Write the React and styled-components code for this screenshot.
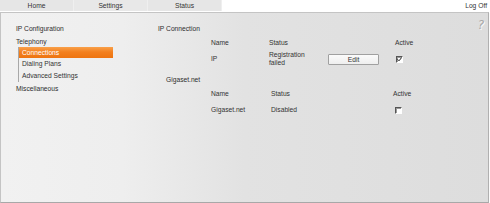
import React from "react";
import styled, { createGlobalStyle } from "styled-components";

const Global = createGlobalStyle`
  html, body { margin: 0; padding: 0; background: #fff; }
  body { width: 490px; height: 203px; overflow: hidden; font-family: "Liberation Sans", Arial, sans-serif; font-size: 6.7px; color: #333; }
`;

const Page = styled.div`
  width: 490px;
  height: 203px;
  display: flex;
  flex-direction: column;
`;

const TopBar = styled.div`
  display: flex;
  height: 11px;
  align-items: stretch;
`;

const Tab = styled.div`
  width: 73px;
  display: flex;
  align-items: center;
  justify-content: center;
  background: ${(p) => (p.$active ? "#e8e8e8" : "#e6e6e6")};
  border-right: 1px solid #efefef;
  color: #333;
`;

const Spacer = styled.div`
  flex: 1;
`;

const LogOff = styled.div`
  display: flex;
  align-items: center;
  padding: 0 3px 1px 0;
  color: #333;
`;

const Panel = styled.div`
  position: relative;
  width: 487px;
  height: 189px;
  margin-top: 1px;
  border: 1px solid #c4c4c4;
  border-right-color: #b0b0b0;
  border-bottom-color: #a8a8a8;
  box-shadow: 0 1px 1px rgba(0, 0, 0, 0.12);
  background: linear-gradient(90deg, #f1f1f1 0%, #eeeeee 25%, #e2e2e2 50%, #dddddd 100%);
  display: flex;
`;

const Help = styled.div`
  position: absolute;
  right: 4px;
  top: 6px;
  font-family: "DejaVu Sans", sans-serif;
  font-size: 12px;
  font-style: italic;
  color: #a8a8a8;
  text-shadow: 1px 1px 0 #fafafa;
  line-height: 13px;
`;

const Sidebar = styled.div`
  width: 142px;
  padding: 9px 0 0 15px;
  display: flex;
  flex-direction: column;
`;

const MenuItem = styled.div`
  height: 13px;
  line-height: 13px;
  color: #2e2e2e;
`;

const SubMenu = styled.div`
  margin: -1px 0 0 2px;
  border-left: 1px solid #a8a8a8;
  display: flex;
  flex-direction: column;
`;

const SubItem = styled.div`
  width: 91px;
  height: ${(p) => (p.$active ? 11 : 12)}px;
  line-height: ${(p) => (p.$active ? 11 : 12)}px;
  padding-left: 3px;
  color: ${(p) => (p.$active ? "#fff" : "#333")};
  background: ${(p) => (p.$active ? "linear-gradient(180deg, #f9a04a 0%, #f3801f 45%, #ee7410 100%)" : "transparent")};
`;

const Content = styled.div`
  flex: 1;
  padding-top: 10px;
  display: flex;
  flex-direction: column;
`;

const Heading = styled.div`
  height: 12px;
  line-height: 12px;
  margin: ${(p) => p.$margin || "0"};
  padding-left: ${(p) => p.$indent || 0}px;
  color: #2e2e2e;
`;

const Table = styled.div`
  display: grid;
  grid-template-columns: ${(p) => p.$cols};
  grid-template-rows: 10px 18px;
  row-gap: 2px;
  margin: ${(p) => p.$margin || "0"} 0 0 53px;
  align-items: center;
`;

const Cell = styled.div`
  line-height: 8px;
  color: #333;
`;

const Button = styled.button`
  width: 51px;
  height: 11px;
  padding: 0;
  margin: 0;
  font: inherit;
  color: #333;
  background: linear-gradient(180deg, #fbfbfb 0%, #eeeeee 100%);
  border: 1px solid #a0a0a0;
  border-radius: 1px;
  display: flex;
  align-items: center;
  justify-content: center;
`;

const Check = styled.span`
  width: 5px;
  height: 5px;
  margin-left: ${(p) => p.$offset || 0}px;
  border: 1px solid #fff;
  border-top-color: #555;
  border-left-color: #555;
  box-shadow: inset 1px 1px 0 #999;
  background: #fff;
  display: flex;
  align-items: center;
  justify-content: center;
`;

function CheckBox({ checked, offset }) {
  return (
    <Check $offset={offset}>
      {checked && (
        <svg width="5" height="5" viewBox="0 0 5 5">
          <path d="M0.5 2.3 L2 3.8 L4.6 0.6" fill="none" stroke="#222" strokeWidth="1" />
        </svg>
      )}
    </Check>
  );
}

export default function App() {
  return (
    <>
      <Global />
      <Page>
        <TopBar>
          <Tab>Home</Tab>
          <Tab $active>Settings</Tab>
          <Tab>Status</Tab>
          <Spacer />
          <LogOff>Log Off</LogOff>
        </TopBar>
        <Panel>
          <Help>?</Help>
          <Sidebar>
            <MenuItem>IP Configuration</MenuItem>
            <MenuItem>Telephony</MenuItem>
            <SubMenu>
              <SubItem $active>Connections</SubItem>
              <SubItem>Dialing Plans</SubItem>
              <SubItem>Advanced Settings</SubItem>
            </SubMenu>
            <MenuItem>Miscellaneous</MenuItem>
          </Sidebar>
          <Content>
            <Heading>IP Connection</Heading>
            <Table $cols="58px 59px 67px auto" $margin="3px">
              <Cell>Name</Cell>
              <Cell>Status</Cell>
              <Cell />
              <Cell>Active</Cell>
              <Cell>IP</Cell>
              <Cell>
                Registration
                <br />
                failed
              </Cell>
              <Button>Edit</Button>
              <CheckBox checked offset={1} />
            </Table>
            <Heading $indent={8} $margin="6px 0 0 0">Gigaset.net</Heading>
            <Table $cols="60px 122px auto" $margin="3px">
              <Cell>Name</Cell>
              <Cell>Status</Cell>
              <Cell>Active</Cell>
              <Cell>Gigaset.net</Cell>
              <Cell>Disabled</Cell>
              <CheckBox offset={2} />
            </Table>
          </Content>
        </Panel>
      </Page>
    </>
  );
}
